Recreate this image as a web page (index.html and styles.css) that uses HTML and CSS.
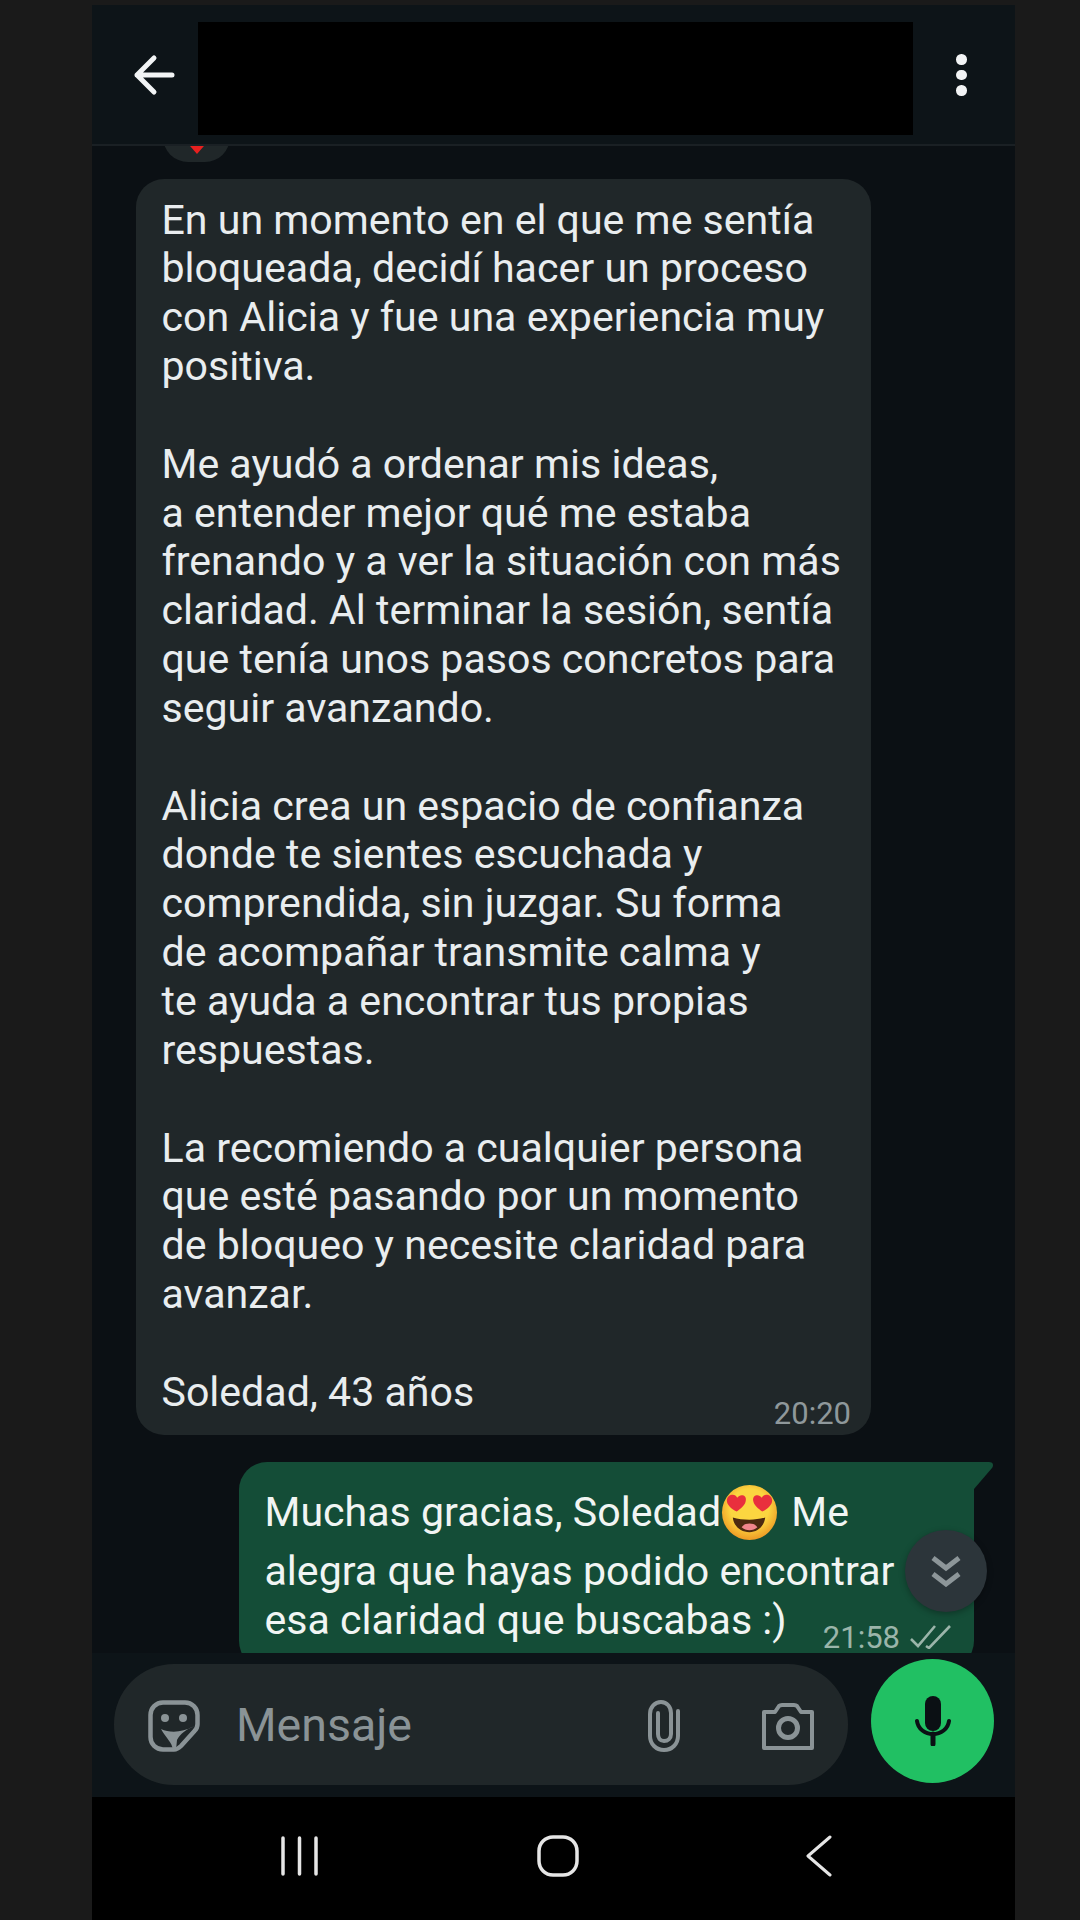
FILE: index.html
```html
<!DOCTYPE html>
<html lang="es">
<head>
  <meta charset="UTF-8">
  <meta name="viewport" content="width=device-width, initial-scale=1.0">
  <title>Chat</title>
  <link rel="stylesheet" href="styles.css">
</head>
<body>
  <div class="phone">
    <!-- Top bar -->
    <header class="top-bar">
      <svg class="back-arrow" viewBox="0 0 42 42">
        <path d="M39 21H4M21 4L4 21L21 38" fill="none" stroke="#f2f4f5" stroke-width="5" stroke-linecap="round" stroke-linejoin="round"/>
      </svg>
      <div class="redacted"></div>
      <div class="menu-dots"><span></span><span></span><span></span></div>
    </header>

    <!-- Messages -->
    <main class="chat">
      <div class="reaction">
        <svg class="reaction-heart" viewBox="0 0 30 30">
          <path d="M15 30L2 15C-3 6 10 0 15 8C20 0 33 6 28 15Z" fill="#e8201f"/>
        </svg>
      </div>

      <div class="bubble bubble-in">
        <p class="bubble-text">En un momento en el que me sentía<br>bloqueada, decidí hacer un proceso<br>con Alicia y fue una experiencia muy<br>positiva.<br><br>Me ayudó a ordenar mis ideas,<br>a entender mejor qué me estaba<br>frenando y a ver la situación con más<br>claridad. Al terminar la sesión, sentía<br>que tenía unos pasos concretos para<br>seguir avanzando.<br><br>Alicia crea un espacio de confianza<br>donde te sientes escuchada y<br>comprendida, sin juzgar. Su forma<br>de acompañar transmite calma y<br>te ayuda a encontrar tus propias<br>respuestas.<br><br>La recomiendo a cualquier persona<br>que esté pasando por un momento<br>de bloqueo y necesite claridad para<br>avanzar.<br><br>Soledad, 43 años</p>
        <span class="time">20:20</span>
      </div>

      <div class="bubble bubble-out">
        <p class="bubble-text">Muchas gracias, Soledad<svg class="emoji" viewBox="0 0 58 58">
            <defs>
              <radialGradient id="face" cx="50%" cy="42%" r="58%">
                <stop offset="0.6" stop-color="#fbd640"/>
                <stop offset="1" stop-color="#ee9a25"/>
              </radialGradient>
            </defs>
            <circle cx="29" cy="29" r="28" fill="url(#face)"/>
            <path d="M16 28C10 25 6 21 6 17C6 13 9 11 12 11C14 11 15.500 12 16.500 14C18 12 20 11 22 11.500C25 12 26 15 25 18C24 22 20 25 16 28Z" fill="#e92f3d"/>
            <path d="M42 28C48 25 52 21 52 17C52 13 49 11 46 11C44 11 42.500 12 41.500 14C40 12 38 11 36 11.500C33 12 32 15 33 18C34 22 38 25 42 28Z" fill="#e92f3d"/>
            <path d="M12 34C22 37 36 37 45 34C44 43 37 49 29 49C20 49 13 43 12 34Z" fill="#4c2a10"/>
            <path d="M21 44C24 39 34 39 37 44C33 48 25 48 21 44Z" fill="#f0868c"/>
          </svg> Me<br>alegra que hayas podido encontrar<br>esa claridad que buscabas :)</p>
        <span class="time time-out">21:58<svg class="ticks" viewBox="0 0 41 24">
            <path d="M1 14L8 21L25 1M16 21L19 23L40 1" fill="none" stroke="#9bb5aa" stroke-width="2.600"/>
          </svg></span>
        <svg class="bubble-tail" viewBox="0 0 20 27">
          <path d="M0 0H15C19 0 20 3 18 6L0 27Z" fill="#144d37"/>
        </svg>
      </div>

      <button class="scroll-down">
        <svg viewBox="0 0 30 32">
          <path d="M2 3L15 13L28 3M2 19L15 29L28 19" fill="none" stroke="#8d9699" stroke-width="5"/>
        </svg>
      </button>
    </main>

    <!-- Message box -->
    <section class="composer">
      <div class="input-pill">
        <svg class="icon-sticker" viewBox="0 0 52 52">
          <path d="M15 2.500H37C44 2.500 49.500 8 49.500 15V24C49.500 27 48.500 29 46.500 31L33 46C31 48 29 49.500 26 49.500H15C8 49.500 2.500 44 2.500 37V15C2.500 8 8 2.500 15 2.500Z" fill="none" stroke="#8a9396" stroke-width="4.500"/>
          <circle cx="17" cy="18" r="4" fill="#8a9396"/>
          <circle cx="35" cy="18" r="4" fill="#8a9396"/>
          <path d="M13 29C22 33 33 33 47 26C38 29 32 34 29 40L28 50H25C24 42 18 38 13 29Z" fill="#8a9396"/>
        </svg>
        <span class="placeholder">Mensaje</span>
        <svg class="icon-clip" viewBox="0 0 32 52">
          <path d="M30 11V36C30 44 24 50 16 50C8 50 2 44 2 36V14C2 7 7 2 13 2C19 2 23 7 23 13V34C23 38 20 41 16 41C12 41 10 38 10 34V13" fill="none" stroke="#8a9396" stroke-width="4" stroke-linecap="round"/>
        </svg>
        <svg class="icon-camera" viewBox="0 0 52 47">
          <path d="M2 9H13L17 3C18 2 19 2 20 2H32C33 2 34 2 35 3L39 9H50V45H2Z" fill="none" stroke="#8a9396" stroke-width="4" stroke-linejoin="round"/>
          <circle cx="26" cy="25" r="9.500" fill="none" stroke="#8a9396" stroke-width="5"/>
        </svg>
      </div>
      <button class="mic-button">
        <svg viewBox="0 0 36 50">
          <rect x="10" y="0" width="16" height="35" rx="8" fill="#0b1014"/>
          <path d="M2 25C3 33 10 38 18 38C26 38 33 33 34 25" fill="none" stroke="#0b1014" stroke-width="4" stroke-linecap="round"/>
          <path d="M18 38V48" fill="none" stroke="#0b1014" stroke-width="5" stroke-linecap="round"/>
        </svg>
      </button>
    </section>

    <!-- Android nav -->
    <nav class="nav-bar">
      <svg class="nav-recents" viewBox="0 0 37 40">
        <path d="M2 2V38M18.500 2V38M35 2V38" fill="none" stroke="#e6e6e6" stroke-width="3.500" stroke-linecap="round"/>
      </svg>
      <svg class="nav-home" viewBox="0 0 42 42">
        <rect x="2" y="2" width="38" height="38" rx="14" fill="none" stroke="#e6e6e6" stroke-width="3.500"/>
      </svg>
      <svg class="nav-back" viewBox="0 0 26 42">
        <path d="M24 2L2 21L24 40" fill="none" stroke="#e6e6e6" stroke-width="3" stroke-linecap="round" stroke-linejoin="round"/>
      </svg>
    </nav>
  </div>
</body>
</html>
```

FILE: styles.css
```css
/* General Styles */
html,
body {
  height: 100%;
}

body {
  margin: 0;
  background-color: #1a1a1a;
  font-family: 'Roboto', sans-serif;
  overflow: hidden;
}

.phone {
  display: flex;
  flex-direction: column;
  width: 923px;
  height: 1915px;
  margin: 5px 0 0 92px;
  background-color: #0b1014;
}

/* Top Bar */
.top-bar {
  display: flex;
  flex: none;
  box-sizing: border-box;
  height: 141px;
  padding: 17px 0 10px 41px;
  background-color: #0d1418;
  border-bottom: 2px solid #1a2024;
}

.back-arrow {
  width: 42px;
  height: 42px;
  margin-top: 32px;
}

.redacted {
  width: 715px;
  height: 113px;
  margin-left: 23px;
  background-color: #000;
}

.menu-dots {
  display: flex;
  flex-direction: column;
  gap: 5px;
  margin: 32px 0 0 43px;
}

.menu-dots span {
  width: 10.500px;
  height: 10.500px;
  border-radius: 50%;
  background-color: #f2f4f5;
}

/* Messages */
.chat {
  position: relative;
  flex: 1;
  min-height: 0;
  display: flex;
  flex-direction: column;
  padding: 0 41px 0 44px;
  overflow: hidden;
}

.reaction {
  display: flex;
  justify-content: center;
  align-items: flex-end;
  flex: none;
  box-sizing: border-box;
  width: 67px;
  height: 50px;
  margin: -34px 0 17px 27px;
  padding-bottom: 8px;
  border-radius: 25px;
  background-color: #202729;
}

.reaction-heart {
  width: 28px;
  height: 28px;
}

.bubble {
  position: relative;
  display: flex;
  flex: none;
  justify-content: space-between;
  align-items: flex-end;
  box-sizing: border-box;
  width: 735px;
  border-radius: 28px;
}

.bubble-text {
  margin: 0;
  font-size: 41.100px;
  line-height: 48.850px;
  color: #e9edef;
  white-space: nowrap;
}

.bubble-in {
  padding: 16.500px 20px 18.250px 25.500px;
  background-color: #202729;
}

.bubble-out {
  align-self: flex-end;
  margin-top: 27px;
  padding: 22px 23px 24px 25.500px;
  border-top-right-radius: 0;
  background-color: #144d37;
}

.bubble-out .bubble-text {
  color: #f1f5f3;
}

.bubble-tail {
  position: absolute;
  top: 0;
  left: 100%;
  width: 20px;
  height: 27px;
}

.emoji {
  width: 57px;
  height: 57px;
  margin: 0 3px 6px 0;
  vertical-align: -21px;
}

.time {
  display: flex;
  align-items: flex-end;
  margin-left: -200px;
  margin-bottom: -11px;
  font-size: 31px;
  line-height: 28px;
  color: #8f989b;
}

.time-out {
  color: #9bb5aa;
  margin-bottom: -7px;
}

.ticks {
  width: 41px;
  height: 24px;
  margin: 0 0 3px 10px;
}

.scroll-down {
  position: absolute;
  top: 1384px;
  right: 28px;
  display: flex;
  align-items: center;
  justify-content: center;
  width: 82px;
  height: 82px;
  padding: 0;
  border: none;
  border-radius: 50%;
  background-color: #2c353a;
  box-shadow: 0 2px 6px rgba(0, 0, 0, 0.3);
}

.scroll-down svg {
  width: 30px;
  height: 32px;
}

/* Message Box */
.composer {
  display: flex;
  flex: none;
  gap: 23px;
  align-items: flex-start;
  box-sizing: border-box;
  height: 144px;
  padding: 11px 0 0 22px;
  background-color: #0d1418;
}

.input-pill {
  display: flex;
  align-items: center;
  box-sizing: border-box;
  width: 734px;
  height: 121px;
  padding-left: 34px;
  border-radius: 60px;
  background-color: #202729;
}

.icon-sticker {
  width: 52px;
  height: 52px;
  margin-top: 3px;
}

.placeholder {
  width: 410px;
  margin-left: 36px;
  font-size: 46.500px;
  color: #8a9396;
}

.icon-clip {
  width: 32px;
  height: 52px;
  margin-left: 2px;
  margin-top: 3px;
}

.icon-camera {
  width: 52px;
  height: 47px;
  margin-left: 82px;
  margin-top: 3px;
}

.mic-button {
  display: flex;
  align-items: center;
  justify-content: center;
  flex: none;
  width: 123px;
  height: 124px;
  margin-top: -5px;
  padding: 0;
  border: none;
  border-radius: 50%;
  background-color: #21c063;
}

.mic-button svg {
  width: 36px;
  height: 50px;
}

/* Android Nav */
.nav-bar {
  display: flex;
  flex: none;
  align-items: center;
  box-sizing: border-box;
  height: 123px;
  padding: 0 0 5px 189px;
  background-color: #000;
}

.nav-recents {
  width: 37px;
  height: 40px;
}

.nav-home {
  width: 42px;
  height: 42px;
  margin-left: 219px;
}

.nav-back {
  width: 26px;
  height: 42px;
  margin-left: 227px;
}
```
